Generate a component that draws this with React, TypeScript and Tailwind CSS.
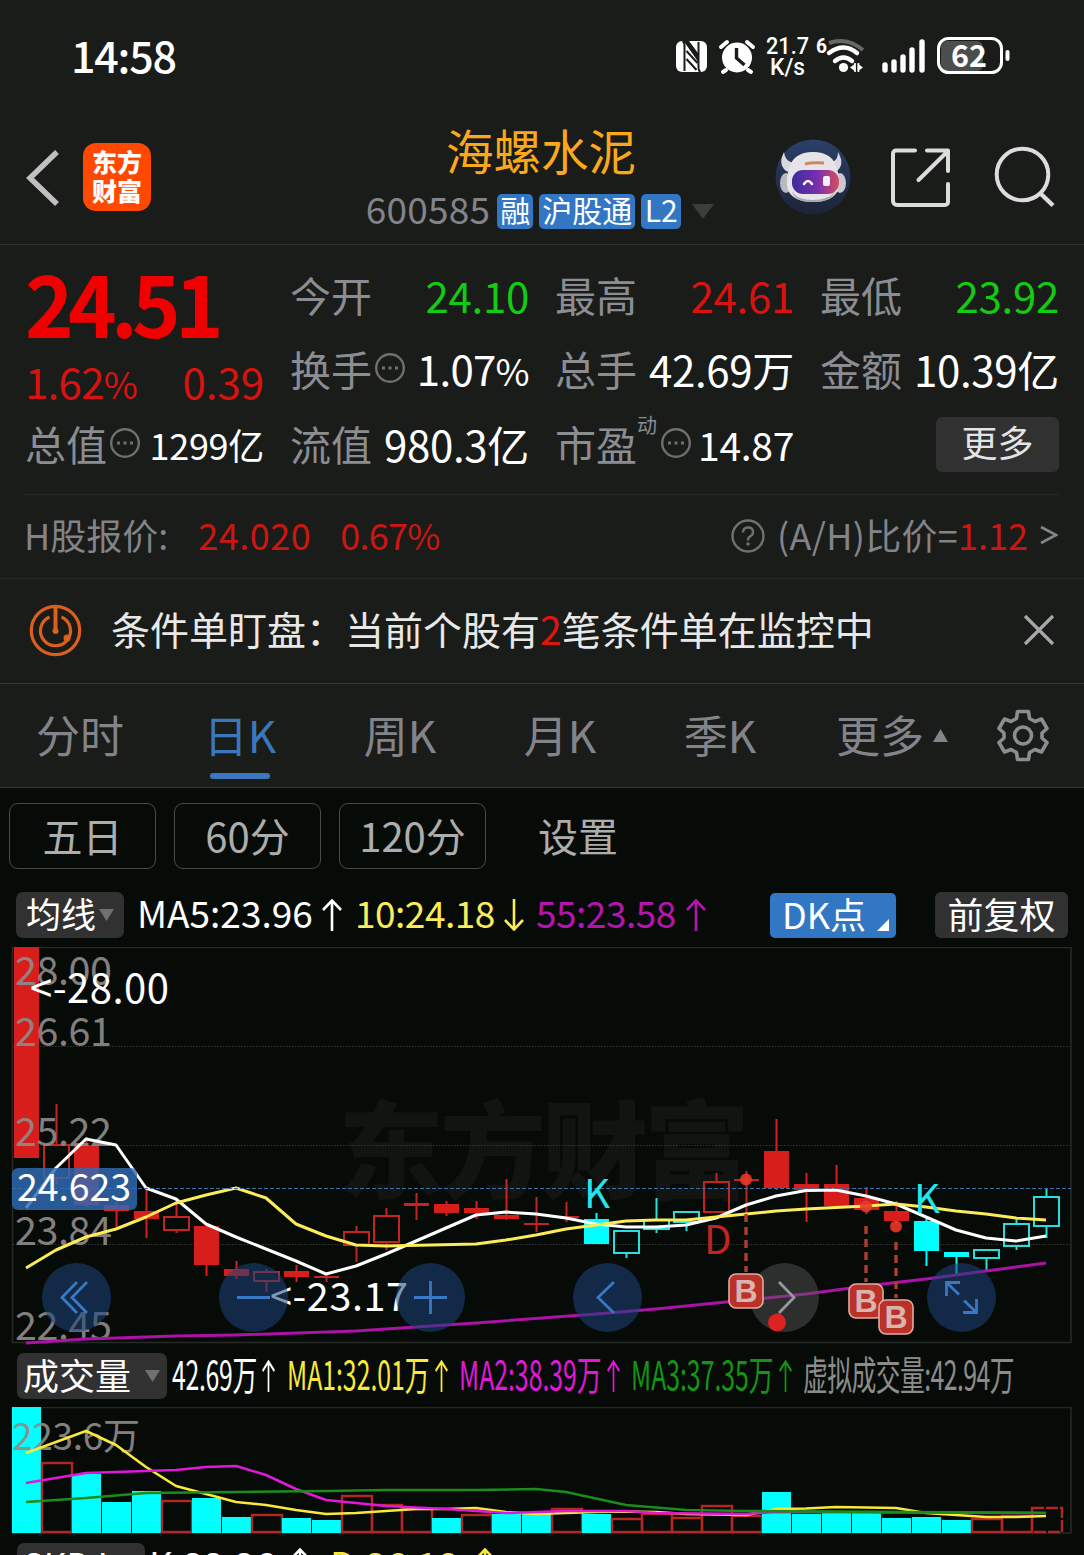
import type { ReactNode } from "react";
import { clsx } from "clsx";

// Stock detail page: status bar, quote header, key figures, and the daily
// K-line chart with its volume pane.

const UP = "#d81e1a";
const CYAN = "#00ffff";

type Candle = {
  kind: "filled" | "hollow" | "doji";
  cyan?: boolean;
  high: number;
  low: number;
  top: number;
  bottom: number;
};

// All prices are already mapped to chart y units, one candle every 30 units.
const CANDLES: Candle[] = [
  { kind: "filled", high: 947, low: 1158, top: 947, bottom: 1158 },
  { kind: "hollow", high: 1104, low: 1184, top: 1145, bottom: 1178 },
  { kind: "filled", high: 1137, low: 1207, top: 1145, bottom: 1205 },
  { kind: "filled", high: 1201, low: 1227, top: 1205, bottom: 1211 },
  { kind: "filled", high: 1189, low: 1238, top: 1211, bottom: 1219 },
  { kind: "hollow", high: 1198, low: 1233, top: 1217, bottom: 1230 },
  { kind: "filled", high: 1226, low: 1276, top: 1226, bottom: 1265 },
  { kind: "filled", high: 1261, low: 1279, top: 1269, bottom: 1276 },
  { kind: "hollow", high: 1269, low: 1292, top: 1272, bottom: 1281 },
  { kind: "filled", high: 1265, low: 1282, top: 1271, bottom: 1277 },
  { kind: "doji", high: 1274, low: 1282, top: 1276, bottom: 1278 },
  { kind: "hollow", high: 1226, low: 1262, top: 1232, bottom: 1245 },
  { kind: "hollow", high: 1208, low: 1250, top: 1216, bottom: 1242 },
  { kind: "doji", high: 1193, low: 1220, top: 1203, bottom: 1206 },
  { kind: "filled", high: 1201, low: 1216, top: 1204, bottom: 1213 },
  { kind: "filled", high: 1201, low: 1219, top: 1208, bottom: 1213 },
  { kind: "filled", high: 1179, low: 1220, top: 1215, bottom: 1219 },
  { kind: "doji", high: 1197, low: 1232, top: 1223, bottom: 1225 },
  { kind: "doji", high: 1202, low: 1222, top: 1216, bottom: 1218 },
  { kind: "filled", cyan: true, high: 1213, low: 1244, top: 1219, bottom: 1244 },
  { kind: "hollow", cyan: true, high: 1230, low: 1258, top: 1231, bottom: 1253 },
  { kind: "hollow", cyan: true, high: 1198, low: 1233, top: 1220, bottom: 1229 },
  { kind: "hollow", cyan: true, high: 1212, low: 1231, top: 1212, bottom: 1222 },
  { kind: "hollow", high: 1173, low: 1213, top: 1182, bottom: 1212 },
  { kind: "doji", high: 1171, low: 1214, top: 1179, bottom: 1181 },
  { kind: "filled", high: 1119, low: 1190, top: 1151, bottom: 1188 },
  { kind: "filled", high: 1173, low: 1222, top: 1184, bottom: 1190 },
  { kind: "filled", high: 1165, low: 1206, top: 1184, bottom: 1206 },
  { kind: "filled", high: 1187, low: 1214, top: 1198, bottom: 1210 },
  { kind: "filled", high: 1201, low: 1225, top: 1211, bottom: 1221 },
  { kind: "filled", cyan: true, high: 1217, low: 1266, top: 1221, bottom: 1251 },
  { kind: "filled", cyan: true, high: 1252, low: 1275, top: 1252, bottom: 1257 },
  { kind: "hollow", cyan: true, high: 1249, low: 1270, top: 1250, bottom: 1258 },
  { kind: "hollow", cyan: true, high: 1218, low: 1250, top: 1224, bottom: 1246 },
  { kind: "hollow", cyan: true, high: 1189, low: 1238, top: 1197, bottom: 1226 },
];

const MA5 =
  "26,1208 56,1168 86,1139 116,1145 146,1188 176,1199 206,1224 236,1237 266,1249 296,1261 326,1274 356,1266 386,1254 476,1215 506,1212 536,1214 566,1218 596,1224 626,1227 656,1227 686,1225 716,1218 746,1205 776,1196 806,1190.5 836,1190 866,1196 896,1204 926,1217 956,1230 986,1238 1016,1241 1046,1236";
const MA10 =
  "26,1268 56,1250 86,1237 116,1229 146,1217 176,1203 206,1195 236,1188 266,1198 296,1224 326,1236 356,1245 386,1246 476,1244 506,1240 536,1235 566,1229 596,1225 626,1221 656,1220 686,1220 716,1217 746,1214 776,1211 806,1209 836,1207.5 866,1206 896,1204 926,1207 956,1211 986,1214 1016,1218 1046,1220";
const MA55 =
  "26,1343 86,1339 176,1336 236,1335 356,1331 476,1323 596,1314 656,1309 716,1303 806,1294 866,1286 926,1279 986,1271 1046,1263";

const AXIS = [
  { label: "28.00", y: 985 },
  { label: "26.61", y: 1046 },
  { label: "25.22", y: 1146 },
  { label: "23.84", y: 1245 },
  { label: "22.45", y: 1340 },
];

// [top, isCyan]
const VOLUME: [number, boolean][] = [
  [1407, true], [1463, false], [1474, true], [1502, true], [1491, true],
  [1501, false], [1498, true], [1517, true], [1515, false], [1518, true],
  [1520, true], [1496, false], [1505, false], [1509, false], [1518, true],
  [1515, false], [1514, true], [1514, true], [1509, false], [1514, true],
  [1519, false], [1514, false], [1518, false], [1506, false], [1516, false],
  [1492, true], [1514, true], [1512, true], [1512, true], [1518, true],
  [1517, true], [1520, true], [1519, false], [1516, false], [1508, false],
];

const cx = (i: number) => 26 + i * 30;

export default function App() {
  return (
    <div className="flex h-[1555px] w-[1084px] flex-col overflow-hidden bg-[#070b08] font-['Noto_Sans_CJK_SC','Noto_Sans',sans-serif] text-white">
      <div className="shrink-0 bg-[#191c19]">
        <StatusBar />
        <Header />
        <Quote />
        <HShare />
        <Notice />
        <Tabs />
      </div>
      <PeriodRow />
      <AverageRow />
      <KChart />
      <VolumeRow />
      <VolumeChart />
      <SkdjRow />
    </div>
  );
}

function StatusBar() {
  return (
    <div className="flex h-[112px] items-center pl-[71px] pr-[74px]">
      <span className="pb-[3px] text-[43px] font-medium leading-none tracking-[-1.200px]">14:58</span>
      <svg className="ml-auto" width="336" height="44" viewBox="674 34 336 44" fill="none">
        {/* nfc */}
        <rect x="676" y="41" width="31" height="31" rx="6" fill="#fff" />
        <path d="M684.5 71V45q0-3-2-4M698.5 42v26q0 3 2 4" stroke="#191c19" strokeWidth="2" />
        <path d="M685.500 42h3l9 12v5zM686.500 51l11 12M686.500 59l10 11" fill="#191c19" stroke="#191c19" strokeWidth="2" />
        {/* alarm */}
        <circle cx="737" cy="57.5" r="15" fill="#fff" />
        <path d="M721 47l6-5M753 47l-6-5M726 70l-3 2M748 70l3 2" stroke="#fff" strokeWidth="4" strokeLinecap="round" />
        <path d="M736.5 48v10l8 7" stroke="#191c19" strokeWidth="3.4" />
        <g fill="#fff" fontFamily="Roboto" fontWeight="500">
          <text x="766" y="54" fontSize="24" textLength="43" lengthAdjust="spacingAndGlyphs">21.7</text>
          <text x="770" y="75" fontSize="23" textLength="35" lengthAdjust="spacingAndGlyphs">K/s</text>
          <text x="816" y="53" fontSize="20" fontWeight="700" textLength="11" lengthAdjust="spacingAndGlyphs">6</text>
        </g>
        {/* wifi */}
        <path d="M829 43q18-6 34 7" stroke="#666866" strokeWidth="4" />
        <path d="M829 53q15-11 28 0M835 61q8.500-7 17 0" stroke="#fff" strokeWidth="4.4" strokeLinecap="round" />
        <circle cx="843.5" cy="67.5" r="4.6" fill="#fff" />
        <path d="M850 67.5l5.5-4v8zM863 67.5l-5.500-4v8z" fill="#fff" />
        <path d="M855 63v9M858.500 63v9" stroke="#fff" strokeWidth="1.6" />
        {/* signal */}
        <path d="M885 65v5M894 62v8M903 57v13M912 50v20M922 42v28" stroke="#fff" strokeWidth="5.4" strokeLinecap="round" />
        {/* battery */}
        <rect x="941" y="41" width="42" height="30" rx="6" fill="#4c4e4c" />
        <rect x="938.500" y="38.500" width="63" height="34" rx="10" stroke="#fff" strokeWidth="3" />
        <path d="M1007.500 52v7" stroke="#fff" strokeWidth="4" strokeLinecap="round" />
        <text x="951" y="67" fill="#fff" fontSize="31" fontWeight="700" fontFamily="Noto Sans CJK SC" textLength="36" lengthAdjust="spacingAndGlyphs">62</text>
      </svg>
    </div>
  );
}

function Header() {
  return (
    <header className="flex h-[133px] items-start border-b border-[#2e312e] pl-6 pr-[28px] pt-2">
      <svg className="mt-[27px]" width="38" height="62" viewBox="24 147 38 62" fill="none">
        <path d="M57 152L30 178l27 26" stroke="#c0c0c0" strokeWidth="5.500" />
      </svg>
      <div className="ml-[21px] mt-[23px] flex h-[68px] w-[68px] flex-col items-center justify-center rounded-[13px] bg-[#ff4800] pb-[3px] text-[25px] font-black leading-[29px]">
        <span>东方</span>
        <span>财富</span>
      </div>
      <div className="ml-[213px] flex w-[352px] flex-col items-center">
        <h1 className="h-[58px] pl-[2px] text-[47.500px] leading-[60px] text-[#fba81b]">海螺水泥</h1>
        <div className="mt-[13px] flex items-center text-[37px] leading-[34px] text-[#83838a]">
          <span className="pb-[6px] tracking-[0.2px]">600585</span>
          <span className="ml-[7px] flex gap-[6px] text-[30px] text-white">
            <Badge className="w-[36px]">融</Badge>
            <Badge className="w-[96px]">沪股通</Badge>
            <Badge className="w-[40px]">L2</Badge>
          </span>
          <svg className="ml-[11px]" width="22" height="16" viewBox="0 0 22 16">
            <path d="M0 1h22L11 16z" fill="#3c3e3c" />
          </svg>
        </div>
      </div>
      <svg className="ml-auto mt-[19px]" width="76" height="76" viewBox="0 0 76 76">
        <defs>
          <linearGradient id="visor" x1="0" x2="1">
            <stop offset="0" stopColor="#3a2c9c" />
            <stop offset=".55" stopColor="#7a2fae" />
            <stop offset="1" stopColor="#d8505c" />
          </linearGradient>
          <linearGradient id="sky" x1="0" x2="0" y1="0" y2="1">
            <stop offset="0" stopColor="#2b3f68" />
            <stop offset="1" stopColor="#1c2438" />
          </linearGradient>
        </defs>
        <circle cx="38" cy="38" r="37.500" fill="url(#sky)" />
        <path d="M9 13q-7 14 4 20l9-6-6-4q-6-2-7-10zM63 13q8 14-3 20l-9-6 6-4q6-2 6-10z" fill="#d9d9df" />
        <ellipse cx="11" cy="44" rx="6" ry="10" fill="#b8b8c2" />
        <ellipse cx="65" cy="44" rx="6" ry="10" fill="#c8c8d0" />
        <path d="M14 30q4-17 24-17t24 17q4 12 1 21-5 12-25 12T13 51q-3-9 1-21z" fill="#e6e4e8" />
        <path d="M17 53q6 8 21 8t22-8q-4 10-22 10t-21-10z" fill="#a9a7b0" />
        <rect x="17" y="31" width="47" height="24" rx="11" fill="url(#visor)" />
        <path d="M29 45q4-6 8 0" stroke="#fff" strokeWidth="2.500" fill="none" strokeLinecap="round" />
        <rect x="48" y="37" width="7" height="10" rx="2" fill="#f5f0ff" />
        <path d="M30 25q8-2 19-1" stroke="#c98a5c" strokeWidth="3" />
      </svg>
      <svg className="ml-[40px] mt-[27px]" width="60" height="62" viewBox="891 147 60 62" fill="none">
        <path
          d="M915 150.500H896a3 3 0 0 0-3 3V201a4 4 0 0 0 4 4H945a3 3 0 0 0 3-3V184M927 150.500H948V171M947 152L918.500 180"
          stroke="#dcdcdc"
          strokeWidth="4"
          strokeLinecap="round"
          strokeLinejoin="round"
        />
      </svg>
      <svg className="ml-[43px] mt-[26px]" width="62" height="62" viewBox="994 146 62 62" fill="none">
        <circle cx="1022.500" cy="174.500" r="25.800" stroke="#dcdcdc" strokeWidth="4" />
        <path d="M1041 194l12 11.500" stroke="#dcdcdc" strokeWidth="4.500" />
      </svg>
    </header>
  );
}

function Badge({ className, children }: { className: string; children: ReactNode }) {
  return (
    <span className={clsx("flex h-[35px] items-center justify-center rounded-[5px] bg-[#3277c4] pb-[5px] leading-none", className)}>
      {children}
    </span>
  );
}

function Quote() {
  return (
    <section className="mx-6 grid h-[250px] grid-cols-[239px_239px_239px_239px] gap-x-[26px] border-b border-[#252725] pl-px pt-[12px] text-[42px] leading-[75px]">
      <div className="flex flex-col">
        <div className="h-[84px] origin-left scale-x-[0.96] text-[86px] font-bold leading-[88px] tracking-[-6px] text-[#f00000]">24.51</div>
        <div className="mt-[4px] flex h-[61px] justify-between leading-[72px] text-[#d8130f]">
          <Percent>1.62</Percent>
          <span>0.39</span>
        </div>
        <Cell label="总值" info>
          <span className="text-[36px]">1299亿</span>
        </Cell>
      </div>
      <div>
        <Cell label="今开"><span className="text-[#14cb14]">24.10</span></Cell>
        <Cell label="换手" info><Percent>1.07</Percent></Cell>
        <Cell label="流值">980.3亿</Cell>
      </div>
      <div>
        <Cell label="最高"><span className="text-[#d8130f]">24.61</span></Cell>
        <Cell label="总手">42.69万</Cell>
        <Cell label="市盈" sup="动" info><span className="text-[39px]">14.87</span></Cell>
      </div>
      <div>
        <Cell label="最低"><span className="text-[#14cb14]">23.92</span></Cell>
        <Cell label="金额">10.39亿</Cell>
        <button className="ml-auto mt-[11px] flex h-[55px] w-[123px] items-center justify-center rounded-md bg-[#313131] pb-[7px] text-[36px] leading-none text-[#e4e4e4]">
          更多
        </button>
      </div>
    </section>
  );
}

function Percent({ children }: { children: ReactNode }) {
  return (
    <span className="tracking-[-0.700px]">
      {children}
      <span className="text-[37px]">%</span>
    </span>
  );
}

function Cell({ label, info, sup, children }: { label: string; info?: boolean; sup?: string; children: ReactNode }) {
  return (
    <div className="flex h-[74.500px] items-center whitespace-nowrap">
      <span className="text-[41px] text-[#8c8c93]">{label}</span>
      {sup && <span className="mb-[36px] w-[21px] text-[20px] leading-none text-[#8c8c93]">{sup}</span>}
      {info && (
        <svg className="ml-[2px] mt-px" width="32" height="32" viewBox="0 0 32 32" fill="none">
          <circle cx="16" cy="15" r="13.800" stroke="#707070" strokeWidth="2.400" />
          <path d="M8 15h3M14.500 15h3M21 15h3" stroke="#707070" strokeWidth="3" />
        </svg>
      )}
      <span className="ml-auto tracking-[-0.300px]">{children}</span>
    </div>
  );
}

function HShare() {
  return (
    <section className="flex h-[84px] items-center border-b border-[#252725] pl-[24px] pr-[26px] text-[36px] leading-none text-[#83838a]">
      <span className="pb-[6px]">H股报价:</span>
      <span className="ml-[30px] pb-[6px] tracking-[0.500px] text-[#cc1612]">24.020</span>
      <span className="ml-[29px] pb-[6px] tracking-[-0.700px] text-[#cc1612]">0.67%</span>
      <svg className="mb-px ml-auto" width="34" height="34" viewBox="0 0 34 34" fill="none">
        <circle cx="17" cy="17" r="15.500" stroke="#707070" strokeWidth="2.400" />
        <path d="M12 13.500q0-5 5-5t5 4.500q0 3-3 4.500-2 1-2 4" stroke="#707070" strokeWidth="2.400" />
        <circle cx="17" cy="25" r="1.800" fill="#707070" />
      </svg>
      <span className="ml-[12px] pb-[6px] tracking-[0.300px]">(A/H)比价=</span>
      <span className="pb-[6px] text-[#cc1612]">1.12</span>
      <svg className="mb-[3px] ml-[12px]" width="18" height="20" viewBox="0 0 18 20" fill="none">
        <path d="M1 2l15 8-15 8" stroke="#83838a" strokeWidth="2.600" />
      </svg>
    </section>
  );
}

function Notice() {
  return (
    <section className="flex h-[105px] items-center border-b border-[#343734] pl-[29px] pr-[29px]">
      <svg className="mb-[2px]" width="53" height="53" viewBox="0 0 53 53" fill="none" stroke="#dd5f1c" strokeWidth="3.200">
        <circle cx="26.500" cy="26.500" r="24.200" />
        <path d="M20.500 13a15 15 0 1 0 12 0" />
        <path d="M26.500 3v23" strokeWidth="4" />
        <circle cx="26.500" cy="27" r="3" fill="#dd5f1c" stroke="none" />
        <circle cx="38" cy="34" r="3.500" fill="#dd5f1c" stroke="none" />
      </svg>
      <p className="ml-[29px] pb-[6px] text-[39px] leading-none text-[#e8e8e8]">
        条件单盯盘：当前个股有<span className="text-[#e0140f]">2</span>笔条件单在监控中
      </p>
      <svg className="mb-[2px] ml-auto" width="32" height="32" viewBox="0 0 32 32" fill="none">
        <path d="M2 2l28 28M30 2L2 30" stroke="#a8a8a8" strokeWidth="3.200" />
      </svg>
    </section>
  );
}

const TABS = ["分时", "日K", "周K", "月K", "季K"];

function Tabs() {
  return (
    <nav className="flex h-[104px] border-b border-[#343734] text-[44px] leading-none text-[#83838a]">
      {TABS.map((tab) => (
        <div
          key={tab}
          className={clsx("flex w-[160px] flex-col items-center pt-[28px]", tab === "日K" && "text-[#3a77bd]")}
        >
          <span className="h-[61px]">{tab}</span>
          {tab === "日K" && <span className="h-[6px] w-[60px] rounded-full bg-[#3a77bd]" />}
        </div>
      ))}
      <div className="flex items-start pl-[36px] pt-[28px]">
        更多
        <svg className="ml-[9px] mt-[17px]" width="15" height="13" viewBox="0 0 15 13">
          <path d="M7.500 0L15 13H0z" fill="#83838a" />
        </svg>
      </div>
      <svg className="ml-auto mr-[35px] mt-[25px]" width="52" height="53" viewBox="0 0 52 53" fill="none" stroke="#8c8c93" strokeWidth="3.600">
        <path d="M20.500 2.500h11l1 7 5.500 3 6.500-2.500 5.500 9.500-5 4.500v5l5 4.500-5.500 9.500-6.500-2.500-5.500 3-1 7h-11l-1-7-5.500-3L7.500 43 2 33.500 7 29v-5l-5-4.500L7.500 10l6.500 2.500 5.500-3z" strokeLinejoin="round" />
        <circle cx="26" cy="26.500" r="8.500" />
      </svg>
    </nav>
  );
}

function PeriodRow() {
  return (
    <div className="flex h-[81px] shrink-0 items-end gap-[18px] pl-[9px] text-[40px] leading-none text-[#adadad]">
      {["五日", "60分", "120分"].map((p) => (
        <button key={p} className="flex h-[66px] w-[147px] items-center justify-center rounded-[9px] border-[1.500px] border-[#484b48] pb-[3px]">
          {p}
        </button>
      ))}
      <span className="flex h-[66px] items-center pb-[3px] pl-[34px]">设置</span>
    </div>
  );
}

function Arrow({ down, className }: { down?: boolean; className?: string }) {
  return (
    <svg
      className={clsx("shrink-0", down && "rotate-180", className)}
      width="20"
      height="32"
      viewBox="0 0 20 32"
      preserveAspectRatio="none"
      fill="none"
      stroke="currentColor"
    >
      <path d="M10 32V1.500M1 11l9-9.500 9 9.500" strokeWidth="2.600" />
    </svg>
  );
}

function AverageRow() {
  return (
    <div className="flex h-[78px] shrink-0 items-center pl-4 pr-[16px] pt-[14px] text-[37px] leading-none">
      <Pill className="w-[108px] pl-[10px] text-[35px]" caret="ml-[3px]">均线</Pill>
      <span className="ml-[13px] w-[177px] pb-[5px]">MA5:23.96</span>
      <Arrow className="ml-[8px]" />
      <span className="ml-[13px] w-[140px] pb-[5px] tracking-[-0.500px] text-[#fcec5a]">10:24.18</span>
      <Arrow down className="ml-[9px] text-[#fcec5a]" />
      <span className="ml-[12px] w-[140px] pb-[5px] tracking-[-0.500px] text-[#b515ae]">55:23.58</span>
      <Arrow className="ml-[10px] text-[#b515ae]" />
      <button className="ml-auto flex h-[45px] w-[126px] items-center rounded-[5px] bg-[#3277c4] pl-[12px] text-[36px]">
        <span className="pb-[5px]">DK点</span>
        <svg className="ml-[11px] mt-[20px]" width="12" height="12" viewBox="0 0 12 12">
          <path d="M12 0v12H0z" fill="#fff" />
        </svg>
      </button>
      <button className="ml-[39px] flex h-[46px] w-[133px] items-center justify-center rounded-md bg-[#313131] pb-[5px] text-[36px]">
        前复权
      </button>
    </div>
  );
}

function Pill({ className, caret, children }: { className: string; caret: string; children: ReactNode }) {
  return (
    <button className={clsx("flex h-[46px] shrink-0 items-center whitespace-nowrap rounded-[7px] bg-[#313131]", className)}>
      <span className="pb-[5px]">{children}</span>
      <svg className={caret} width="15" height="12" viewBox="0 0 15 12">
        <path d="M0 0h15L7.500 12z" fill="#707070" />
      </svg>
    </button>
  );
}

function CandleShape({ c, x }: { c: Candle; x: number }) {
  const color = c.cyan ? (c.kind === "filled" ? CYAN : "#28dede") : c.kind === "filled" ? UP : "#c42320";
  const mid = x + 0.5;
  return (
    <g stroke={color} strokeWidth="2">
      {c.high < c.top && <path d={`M${mid} ${c.high}V${c.top}`} />}
      {c.low > c.bottom && <path d={`M${mid} ${c.bottom}V${c.low}`} />}
      {c.kind === "hollow" ? (
        <rect x={x - 12} y={c.top} width="25" height={c.bottom - c.top} fill="none" />
      ) : (
        <rect x={x - 12} y={c.top} width="25" height={c.bottom - c.top} fill={color} stroke="none" />
      )}
    </g>
  );
}

function KChart() {
  return (
    <svg className="block shrink-0" width="1084" height="400" viewBox="0 947 1084 400" fill="none" fontFamily="Noto Sans CJK SC">
      <rect x="12.500" y="947.500" width="1058.500" height="395" stroke="#262826" strokeWidth="1.600" />
      <text x="338" y="1190" fill="#111411" fontSize="106" fontWeight="900" textLength="412">东方财富</text>
      <path d="M13 1046.500H1070M13 1145.500H1070M13 1244.500H1070" stroke="#343634" strokeDasharray="1.500 1.500" />
      {CANDLES.map((c, i) => (
        <CandleShape key={i} c={c} x={cx(i)} />
      ))}

      <g fill="#8f8b8b" fillOpacity=".93" fontSize="39.500">
        {AXIS.map((a) => (
          <text key={a.label} x="15" y={a.y} textLength="97">{a.label}</text>
        ))}
      </g>

      <g strokeLinejoin="round">
        <polyline points={MA55} stroke="#ab12a6" strokeWidth="3" />
        <polyline points={MA5} stroke="#fff" strokeWidth="3" />
        <polyline points={MA10} stroke="#fcec5a" strokeWidth="3" />
      </g>
      <path d="M12 1188.500H1071" stroke="#3f6fa8" strokeWidth="1.200" strokeDasharray="4 2" />

      {/* trade signals */}
      <g fontSize="40">
        <text x="584" y="1208" fill="#22e6ea" textLength="26" lengthAdjust="spacingAndGlyphs">K</text>
        <text x="914" y="1213" fill="#22e6ea" textLength="26" lengthAdjust="spacingAndGlyphs">K</text>
        <text x="704" y="1254" fill="#c42320">D</text>
      </g>

      <text x="30" y="1003" fill="#fff" fontSize="40" textLength="139">{"<-28.00"}</text>
      <text x="270" y="1311" fill="#fff" fontSize="39.500" textLength="138">{"<-23.17"}</text>

      <rect x="12" y="1168" width="125" height="42" rx="6" fill="#2f6bb4" fillOpacity=".82" />
      <text x="17" y="1201" fill="#fff" fontSize="37.500" textLength="114">24.623</text>

      {/* chart controls */}
      <g fill="#1b447c" fillOpacity=".55">
        <circle cx="76.500" cy="1297.500" r="34.500" />
        <circle cx="253.500" cy="1297.500" r="34.500" />
        <circle cx="430.500" cy="1297.500" r="34.500" />
        <circle cx="607.500" cy="1297.500" r="34.500" />
        <circle cx="961.500" cy="1297.500" r="34.500" />
      </g>
      <circle cx="784.500" cy="1297.500" r="34.500" fill="#5a5a5a" fillOpacity=".45" />
      <g stroke="#3878c4" strokeWidth="2.800">
        <path d="M77 1282l-15 15.500 15 15.500M87 1282l-15 15.500 15 15.500" />
        <path d="M237 1297.500h33M414 1297.500h33M430.500 1281v33" />
        <path d="M614 1282l-16 15.500 16 15.500" />
        <path d="M946.500 1296v-13.500H960M947 1283l12 11.500M976.500 1299v13.500H963M976 1312l-12-11.500" />
      </g>
      <path d="M779 1282l15 15.500-15 15.500" stroke="#98989c" strokeWidth="2.800" />

      <g stroke="#b03c2e" strokeWidth="3.400" strokeDasharray="8 5">
        <path d="M746 1214v58M866 1226v56M896 1242v56" />
      </g>
      <g fill="#e8382a" fillOpacity=".9">
        <circle cx="746" cy="1179.500" r="6" />
        <circle cx="866" cy="1206.500" r="6" />
        <circle cx="896" cy="1226.500" r="6" />
      </g>
      <circle cx="777" cy="1322.500" r="9" fill="#dc2322" />
      {[[746, 1291], [866, 1301], [896, 1317]].map(([x, y]) => (
        <g key={x}>
          <rect x={x - 17} y={y - 17} width="34" height="34" rx="7" fill="#ba3127" stroke="#e2aaa2" strokeWidth="1.600" />
          <text x={x} y={y + 11} fill="#d8b4b0" fontSize="32" fontWeight="700" textAnchor="middle" fontFamily="Liberation Sans">
            B
          </text>
        </g>
      ))}
    </svg>
  );
}

// Horizontally condensed label, the width class reserves the condensed room.
function Narrow({ className, children }: { className: string; children: ReactNode }) {
  return (
    <span className={clsx("shrink-0 whitespace-nowrap pb-[6px]", className)}>
      <span className="inline-block origin-left scale-x-[0.62]">{children}</span>
    </span>
  );
}

function VolumeRow() {
  return (
    <div className="flex h-[60px] shrink-0 items-center pb-[2px] pl-[17px] text-[40px] leading-none">
      <Pill className="w-[150px] pl-[6px] text-[36px]" caret="ml-[14px]">成交量</Pill>
      <Narrow className="ml-[5px] w-[85px] tracking-[-0.500px]">42.69万</Narrow>
      <Arrow className="ml-[5px] w-[13px]" />
      <span className="flex items-center text-[#fbe93a]">
        <Narrow className="ml-[12px] w-[144px]">MA1:32.01万</Narrow>
        <Arrow className="ml-[4px] w-[13px]" />
      </span>
      <span className="flex items-center text-[#e018d8]">
        <Narrow className="ml-[11px] w-[144px]">MA2:38.39万</Narrow>
        <Arrow className="ml-[4px] w-[13px]" />
      </span>
      <span className="flex items-center text-[#149414]">
        <Narrow className="ml-[11px] w-[144px]">MA3:37.35万</Narrow>
        <Arrow className="ml-[4px] w-[13px]" />
      </span>
      <Narrow className="ml-[11px] w-[210px] tracking-[-0.900px] text-[#8c8c8c]">虚拟成交量:42.94万</Narrow>
    </div>
  );
}

function VolumeChart() {
  const last = VOLUME.length - 1;
  return (
    <svg className="block shrink-0" width="1084" height="130" viewBox="0 1407 1084 130" fill="none">
      <rect x="12.500" y="1407.500" width="1058.500" height="125.500" stroke="#262826" strokeWidth="1.600" />
      {VOLUME.map(([top, cyan], i) =>
        cyan ? (
          <rect key={i} x={cx(i) - 14} y={top} width="29" height={1533 - top} fill={CYAN} />
        ) : (
          <rect
            key={i}
            x={cx(i) - 14}
            y={top}
            width="30"
            height={1532 - top}
            stroke="#b42622"
            strokeWidth="2.400"
            strokeDasharray={i === last ? "12 2" : undefined}
          />
        ),
      )}
      <text x="12" y="1450" fill="#8f8b8b" fillOpacity=".93" fontSize="37" fontFamily="Noto Sans CJK SC" textLength="128">
        223.6万
      </text>
      <g strokeWidth="2.600" strokeLinejoin="round">
        <polyline
          stroke="#fbe93a"
          points="26,1453 86,1431 116,1445 146,1467 176,1486 206,1494 236,1502 266,1505 296,1510 326,1514 356,1513 386,1511 416,1509 446,1509 476,1508 506,1512 536,1514 566,1513 596,1512 626,1511.5 656,1512 686,1514 746,1515 776,1509 806,1508.5 836,1507 896,1508 926,1513 986,1517 1016,1517 1046,1516"
        />
        <polyline
          stroke="#e018d8"
          points="26,1483 86,1473 116,1472 176,1470 206,1467 236,1466 266,1475 296,1489 326,1500 386,1506 446,1509 506,1513 566,1511 626,1511 656,1513 746,1514 776,1512 1046,1513"
        />
        <polyline
          stroke="#1a8c1a"
          points="26,1502 86,1498 146,1493 236,1492 326,1491 386,1490 476,1490 536,1489 566,1492 626,1505 686,1510 746,1511 1046,1513"
        />
      </g>
    </svg>
  );
}

function SkdjRow() {
  return (
    <div className="flex h-[46px] shrink-0 items-center pl-[17px] pt-[12px] text-[37px] leading-none">
      <Pill className="w-[128px] pl-[6px] text-[35px]" caret="ml-[6px]">SKDJ</Pill>
      <span className="ml-[4px] w-[140px] whitespace-nowrap pb-[5px]">K:22.26</span>
      <Arrow className="mb-[4px] ml-[1px]" />
      <span className="ml-[20px] w-[145px] whitespace-nowrap pb-[5px] text-[#fbe93a]">D:26.18</span>
      <Arrow className="mb-[4px] text-[#fbe93a]" />
    </div>
  );
}
